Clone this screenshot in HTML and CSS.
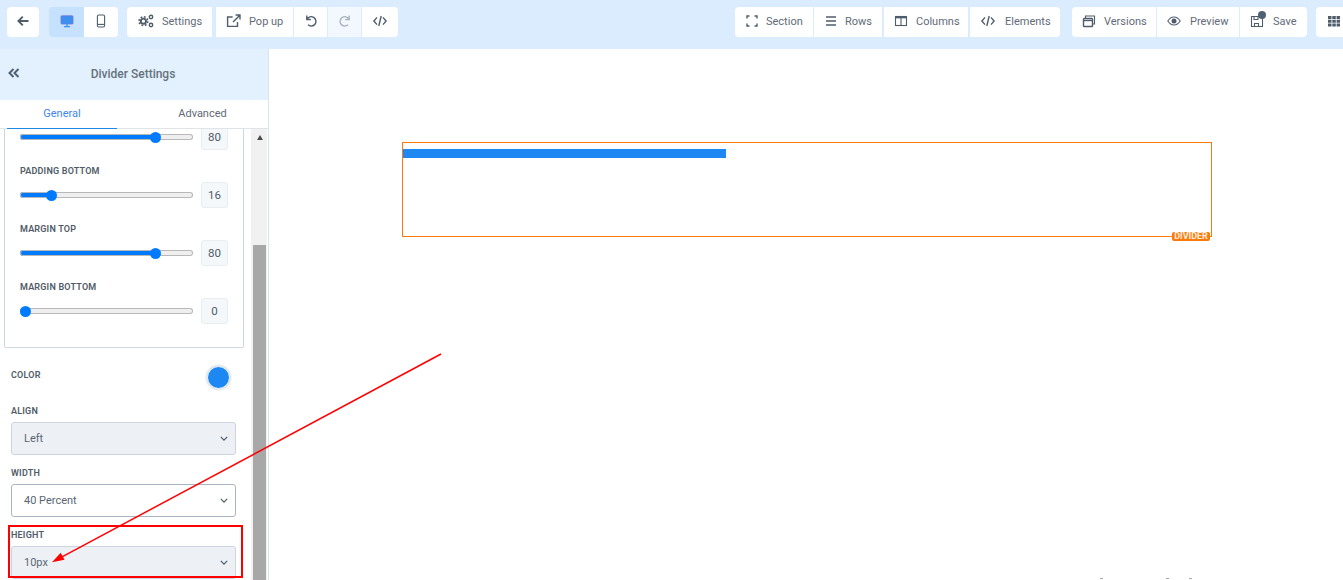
FILE: index.html
```html
<!DOCTYPE html>
<html lang="en">
<head>
<meta charset="utf-8">
<title>Divider Settings</title>
<link rel="stylesheet" href="styles.css">
</head>
<body>
<header class="topbar">
  <div class="group g-back"><button class="btn w-back"><svg class="ic" viewBox="0 0 14 14"><path d="M12.5 7H2.5M6.8 2.6 2.4 7l4.4 4.4" class="s2"/></svg></button></div>
  <div class="group g-device">
    <button class="btn w-desk active"><svg class="ic blue" viewBox="0 0 14 14"><rect x="1" y="1.8" width="12" height="8.2" rx=".8" class="fillb"/><path d="M4 12.6h6M7 10v2.6" class="s1b"/></svg></button>
    <button class="btn w-mob"><svg class="ic" viewBox="0 0 14 14"><rect x="3.4" y="1" width="7.2" height="12" rx="1.4" class="s1"/><path d="M3.6 10.4h6.8" class="s1"/></svg></button>
  </div>
  <div class="group g-mid">
    <button class="btn w-set"><svg class="ic wide" viewBox="0 0 16 14"><circle cx="5.4" cy="7.2" r="2.6" class="s2"/><circle cx="5.4" cy="7.2" r="4.4" class="teeth"/><circle cx="13" cy="3" r="1.7" class="s15"/><circle cx="13" cy="11" r="1.7" class="s15"/></svg><span>Settings</span></button>
    <button class="btn w-pop"><svg class="ic wide" viewBox="0 0 16 14"><path d="M11.5 8v4.4H1.6V3h5" class="s15"/><path d="M7 8 13.6 1.4M9.6 1h4.4v4.4" class="s15"/></svg><span>Pop up</span></button>
    <button class="btn w-undo"><svg class="ic" viewBox="0 0 14 14"><path d="M2.8 1.5v4h4M3 5.3A4.7 4.7 0 1 1 4 10.8" class="s15"/></svg></button>
    <button class="btn w-redo off"><svg class="ic" viewBox="0 0 14 14"><path d="M11.2 1.5v4h-4M11 5.3A4.7 4.7 0 1 0 10 10.8" class="s15 dim"/></svg></button>
    <button class="btn w-code"><svg class="ic" viewBox="0 0 14 14"><path d="M4 3.4.9 7 4 10.6M10 3.4 13.1 7 10 10.6M8.2 2 5.8 12" class="s15"/></svg></button>
  </div>
  <div class="spacer"></div>
  <div class="group g-add">
    <button class="btn w-sec"><svg class="ic" viewBox="0 0 14 14"><path d="M2 4.500V2h2.500M9.500 2H12v2.500M12 9.500V12H9.500M4.500 12H2V9.500" class="s15"/></svg><span>Section</span></button>
    <button class="btn w-row"><svg class="ic" viewBox="0 0 14 14"><path d="M2 3h10M2 7h10M2 11h10" class="s15"/></svg><span>Rows</span></button>
    <button class="btn w-col"><svg class="ic" viewBox="0 0 14 14"><rect x="1.500" y="2.500" width="11" height="9" class="s1"/><path d="M7 2.500v9" class="s1"/><path d="M1.500 3.400h11" class="s2"/></svg><span>Columns</span></button>
    <button class="btn w-ele"><svg class="ic" viewBox="0 0 14 14"><path d="M4 3.400.9 7 4 10.600M10 3.400 13.100 7 10 10.600M8.200 2 5.800 12" class="s15"/></svg><span>Elements</span></button>
  </div>
  <div class="group g-save">
    <button class="btn w-ver"><svg class="ic" viewBox="0 0 14 14"><rect x="1.500" y="4.500" width="9" height="8" rx=".8" class="s15"/><path d="M1.800 6.500h8.400" class="s15"/><path d="M3.500 4V2h9v8h-2" class="s1"/></svg><span>Versions</span></button>
    <button class="btn w-pre"><svg class="ic" viewBox="0 0 14 14"><path d="M.8 7C2.500 4.300 4.600 3 7 3s4.500 1.300 6.200 4c-1.700 2.700-3.800 4-6.200 4S2.500 9.700.8 7Z" class="s1"/><circle cx="7" cy="7" r="2.500" class="dot"/></svg><span>Preview</span></button>
    <button class="btn w-sav"><svg class="ic" viewBox="0 0 14 14"><path d="M1.500 2.500h9l2 2v8h-11Z" class="s1"/><path d="M4 2.500v3h4v-3M4.500 12.500v-3h4v3" class="s1"/></svg><span>Save</span><i class="badge"></i></button>
  </div>
  <div class="group g-grid"><button class="btn w-grid"><svg class="ic" viewBox="0 0 14 14"><path class="dot" d="M1 2h3.500v3H1ZM5.300 2h3.500v3H5.300ZM9.600 2H13v3H9.600ZM1 5.800h3.500v3H1ZM5.300 5.800h3.500v3H5.300ZM9.600 5.800H13v3H9.600ZM1 9.600h3.500v3H1ZM5.300 9.600h3.500v3H5.300ZM9.600 9.600H13v3H9.600Z"/></svg></button></div>
</header>

<div class="workspace">
  <aside class="sidebar">
    <div class="side-head">
      <svg class="collapse" viewBox="0 0 12 10"><path d="M5.500 1 1.500 5l4 4M10.500 1l-4 4 4 4"/></svg>
      <h1>Divider Settings</h1>
    </div>
    <nav class="tabs">
      <a class="tab current">General</a>
      <a class="tab">Advanced</a>
    </nav>
    <div class="side-body">
      <div class="fields">
        <div class="fields-in">
          <section class="spacing">
            <div class="slider-row"><input type="range" class="range" min="0" max="100" value="80" style="--v:80%"><output class="val">80</output></div>
            <label class="cap">PADDING BOTTOM</label>
            <div class="slider-row"><input type="range" class="range" min="0" max="100" value="16" style="--v:16%"><output class="val">16</output></div>
            <label class="cap">MARGIN TOP</label>
            <div class="slider-row"><input type="range" class="range" min="0" max="100" value="80" style="--v:80%"><output class="val">80</output></div>
            <label class="cap">MARGIN BOTTOM</label>
            <div class="slider-row"><input type="range" class="range" min="0" max="100" value="0" style="--v:0%"><output class="val">0</output></div>
          </section>
          <div class="color-row"><label class="cap flat">COLOR</label><span class="swatch"></span></div>
          <label class="cap flat sel-cap">ALIGN</label>
          <div class="sel filled"><select><option>Left</option></select><svg viewBox="0 0 10 6"><path d="M1 1l4 4 4-4"/></svg></div>
          <label class="cap flat sel-cap">WIDTH</label>
          <div class="sel"><select><option>40 Percent</option></select><svg viewBox="0 0 10 6"><path d="M1 1l4 4 4-4"/></svg></div>
          <label class="cap flat sel-cap">HEIGHT</label>
          <div class="sel filled"><select><option>10px</option></select><svg viewBox="0 0 10 6"><path d="M1 1l4 4 4-4"/></svg></div>
        </div>
      </div>
      <div class="scrollbar"><span class="arrow"></span><span class="thumb"></span></div>
    </div>
  </aside>
  <main class="canvas">
    <div class="divider-box">
      <div class="divider-bar"></div>
      <span class="divider-tag">DIVIDER</span>
    </div>
    <i class="speck s-a"></i><i class="speck s-b"></i><i class="speck s-c"></i>
  </main>
</div>

<div class="highlight"></div>
<svg class="annot" viewBox="0 0 1343 580"><path d="M441 354 62 556.900" class="annot-line"/><path d="M52 562.300 60.700 552.800 64.500 559.800Z" class="annot-head"/></svg>
</body>
</html>
```

FILE: styles.css
```css
* { box-sizing: border-box; }
html, body { margin: 0; height: 580px; overflow: hidden; }
body { font-family: Roboto, "Liberation Sans", sans-serif; color: #5f6b78; background: #fff; position: relative; }

.topbar { height: 49px; background: #dbecfe; display: flex; align-items: flex-start; padding: 7px 0 0 7px; }
.group { display: flex; gap: 1px; height: 30px; }
.g-back { margin-right: 10px; }
.g-device { margin-right: 9px; gap: 0; }
.g-add { margin-right: 12px; }
.g-save { margin-right: 9px; }
.spacer { flex: 1; }
.btn { height: 30px; border: 0; background: #fff; display: flex; align-items: center; justify-content: center; font: 400 11px Roboto, sans-serif; color: #5f6b78; padding: 0 0 2px; position: relative; }
.group .btn:first-child { border-radius: 4px 0 0 4px; }
.group .btn:last-child { border-radius: 0 4px 4px 0; }
.group .btn:only-child { border-radius: 4px; }
.g-grid .btn:only-child { border-radius: 4px 0 0 4px; }
.active { background: #c6e1fd; }
.off { background: #f3f8fe; }
.ic { width: 14px; height: 14px; flex: none; overflow: visible; }
.ic.wide { width: 16px; }
.s1, .s15, .s2, .s1b, .teeth { fill: none; stroke: #4f5d6b; }
.s1 { stroke-width: 1.1; }
.s15 { stroke-width: 1.4; }
.s2 { stroke-width: 1.9; }
.teeth { stroke-width: 1.5; stroke-dasharray: 1.8 1.65; }
.s1b { stroke: #3f8ff0; stroke-width: 1.3; }
.fillb { fill: #3f8ff0; stroke: #6a78d8; stroke-width: .8; }
.dim { stroke: #aab5c0; }
.dot { fill: #4f5d6b; }
.w-back { width: 32px; }
.w-desk { width: 35px; }
.w-mob { width: 34px; }
.w-set, .w-pop, .w-sec, .w-row, .w-col, .w-ele, .w-ver, .w-pre, .w-sav { justify-content: flex-start; padding-left: 10px; }
.w-set { width: 85px; margin-right: 3px; padding-left: 11px; gap: 8px; }
.w-pop { width: 77px; gap: 7px; }
.w-undo { width: 33px; }
.w-redo { width: 33px; }
.w-code { width: 36px; }
.w-sec { width: 78px; gap: 7px; }
.w-row { width: 68px; gap: 7px; }
.w-col { width: 84px; gap: 8px; margin-left: 1px; }
.w-ele { width: 90px; gap: 10px; margin-left: 1px; padding-left: 11px; }
.w-ver { width: 84px; gap: 8px; }
.w-pre { width: 82px; gap: 9px; }
.w-sav { width: 67px; gap: 9px; }
.w-grid { width: 27px; justify-content: flex-start; padding-left: 11px; }
.badge { position: absolute; left: 18px; top: 4px; width: 8px; height: 8px; border-radius: 50%; background: #4f6175; }

.workspace { display: flex; height: 531px; }
.sidebar { width: 269px; flex: none; border-right: 1px solid #dde3ea; display: flex; flex-direction: column; }
.side-head { height: 51px; background: #e3f1fe; display: flex; align-items: center; justify-content: center; padding: 0 0 2px; position: relative; }
.side-head h1 { margin: 0 0 0 -2px; font: 500 12px Roboto, sans-serif; color: #66717d; }
.collapse { position: absolute; left: 8px; top: 19px; width: 12px; height: 10px; fill: none; stroke: #4f6175; stroke-width: 2; }
.tabs { height: 29px; display: flex; border-bottom: 1px solid #e0e4e8; flex: none; }
.tab { font-size: 11px; line-height: 27px; text-align: center; color: #5f6b78; }
.tab:first-child { width: 110px; margin-left: 7px; }
.tab:last-child { width: 151px; padding-left: 20px; }
.current { color: #3d86f0; border-bottom: 1px solid #1e88e5; height: 29px; }

.side-body { flex: 1; min-height: 0; display: flex; }
.fields { width: 251px; overflow: hidden; }
.fields-in { margin-top: -6px; padding: 0 15px 0 11px; }
.spacing { margin: 0 7px 0 -7px; border: 1px solid #ced6e0; border-radius: 2px; padding: 0 15px 23px; width: 240px; }
.slider-row { display: flex; align-items: center; height: 26px; }
.range { appearance: none; -webkit-appearance: none; width: 173px; height: 6px; margin: 0 8px 0 0; flex: none; border: 0; border-radius: 3px; box-shadow: inset 0 0 0 1px #b8b8b8; background: linear-gradient(90deg, #007bff var(--v), #efefef var(--v)); }
.range::-webkit-slider-thumb { -webkit-appearance: none; width: 11px; height: 11px; border-radius: 50%; background: #007bff; border: 0; }
.val { width: 27px; height: 26px; border: 1px solid #e8edf2; border-radius: 3px; background: #f4f8fb; font-size: 11.5px; line-height: 24px; text-align: center; color: #4d5b69; flex: none; }
.cap { display: block; font: 600 9px/12px Roboto, sans-serif; letter-spacing: .2px; color: #505b67; margin: 15px 0 5px; }
.flat { margin: 0; }
.color-row { display: flex; justify-content: space-between; align-items: center; height: 23px; margin: 18px 0 0; padding-right: 6px; }
.color-row .cap { margin-top: -6px; }
.swatch { width: 23px; height: 23px; border-radius: 50%; background: #1e88f2; border: 1px solid #fff; box-shadow: 0 0 2px 1px #d5dbe2; }
.sel-cap { margin: 0 0 5px; }
.color-row + .sel-cap { margin-top: 16px; }
.sel { position: relative; height: 33px; width: 225px; margin-bottom: 12px; }
.sel select { appearance: none; -webkit-appearance: none; width: 100%; height: 100%; border: 1px solid #a9b4c1; border-radius: 3px; background: #fff; padding: 0 12px; font: 400 11px Roboto, sans-serif; color: #5a6673; }
.filled select { background: #edf1f6; border-color: #ccd5df; }
.sel svg { position: absolute; right: 8px; top: 14px; width: 8px; height: 5px; fill: none; stroke: #4d5b69; stroke-width: 1.5; }

.scrollbar { width: 16px; background: #f1f1f1; padding: 0 1px 0 2px; display: flex; flex-direction: column; position: relative; }
.arrow { align-self: center; margin: 6px 0 0; border: 3.5px solid transparent; border-top: 0; border-bottom: 5px solid #4a4a4a; height: 0; width: 0; }
.thumb { position: absolute; left: 2px; right: 1px; top: 116px; bottom: 0; background: #a8a8a8; }

.canvas { flex: 1; position: relative; padding: 93px 0 0 133px; }
.divider-box { width: 810px; height: 95px; border: 1px solid #fb7a0a; position: relative; }
.divider-bar { width: 40%; height: 9px; margin-top: 6px; background: #1e88f2; }
.divider-tag { position: absolute; right: 1px; bottom: -5px; width: 38px; height: 9px; background: #fb7a0a; border-radius: 2px; color: #fff0e2; font: 700 9px/9px Roboto, sans-serif; text-align: center; }
.speck { position: absolute; top: 529px; width: 3px; height: 1px; background: #aaa; }
.s-a { left: 831px; }
.s-b { left: 897px; }
.s-c { left: 920px; }

.highlight { position: absolute; left: 8px; top: 525px; width: 235px; height: 53px; border: 2px solid #f00; pointer-events: none; }
.annot { position: absolute; left: 0; top: 0; width: 1343px; height: 580px; pointer-events: none; }
.annot-line { stroke: #f00; stroke-width: 1.5; fill: none; }
.annot-head { fill: #f00; }
```
